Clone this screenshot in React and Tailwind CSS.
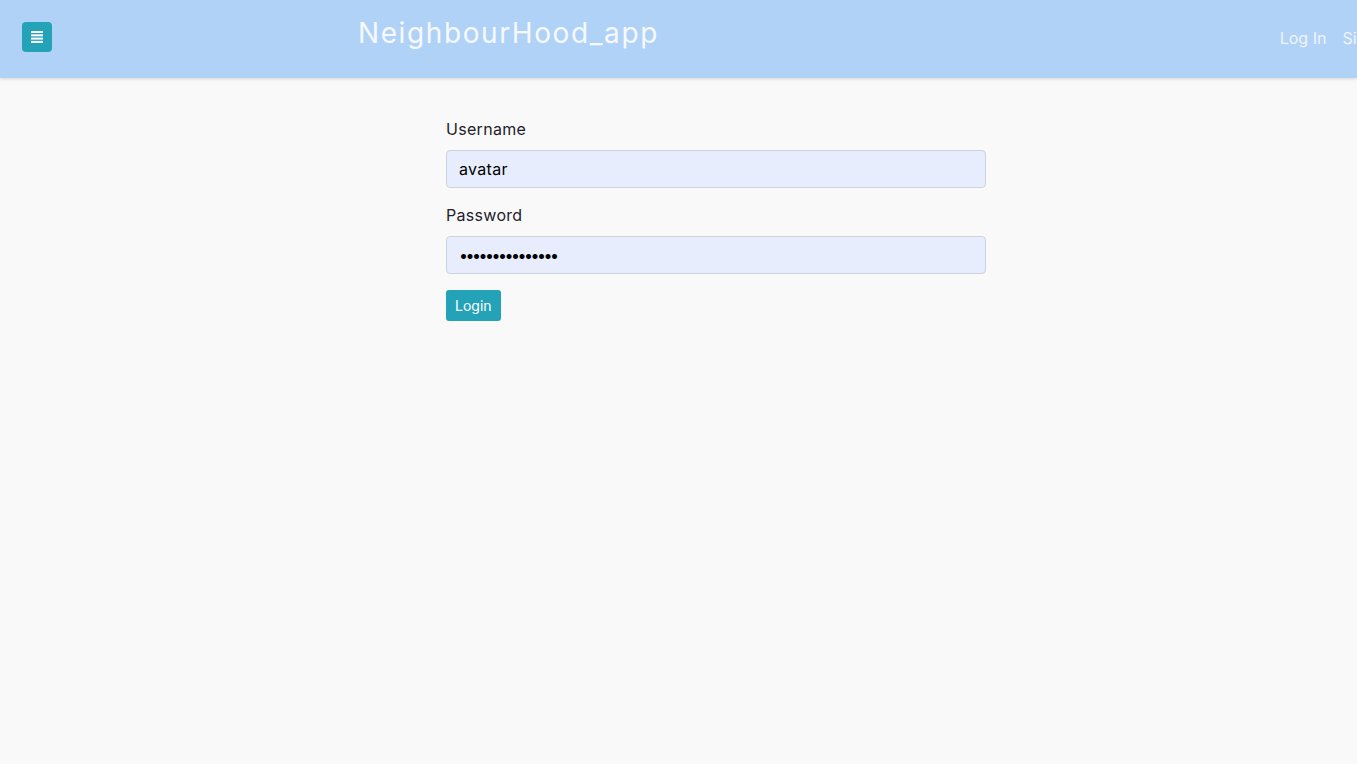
import { useState } from "react";

// simple nav + login form
function MenuIcon() {
  return (
    <svg width="12" height="12" viewBox="0 0 12 12" fill="#fff">
      <rect x="0" y="0" width="12" height="2" />
      <rect x="0" y="3.3" width="12" height="2" />
      <rect x="0" y="6.6" width="12" height="2" />
      <rect x="0" y="9.9" width="12" height="2" />
    </svg>
  );
}

export default function App() {
  const [username, setUsername] = useState("avatar");
  const [password, setPassword] = useState("•••••••••••••••");

  return (
    <div className="min-h-[764px] bg-[#f9f9f9] font-['Inter',sans-serif]">
      <nav className="h-[78px] bg-[#b1d2f7] shadow-[0_1px_3px_rgba(0,0,0,0.15)] flex items-start overflow-hidden">
        <button className="mt-[22px] ml-[22px] w-[30px] h-[30px] rounded-[4px] bg-[#23a2b8] flex items-center justify-center shrink-0">
          <MenuIcon />
        </button>
        <span className="ml-[306px] mt-[14px] text-[28px] leading-[38px] text-[#f6f9ff] tracking-[1.6px] whitespace-nowrap">
          NeighbourHood_app
        </span>
        <div className="ml-auto mt-[27px] flex gap-[16px] text-[16px] leading-[22px] text-[#eef4fd] whitespace-nowrap translate-x-[45px]">
          <a>Log In</a>
          <a>Sign Up</a>
        </div>
      </nav>

      <main className="w-[540px] ml-[446px] pt-[40px]">
        <label className="block text-[16px] leading-[22px] text-[#241b2b] tracking-[0.3px]">Username</label>
        <input
          className="mt-[10px] w-full h-[38px] px-[12px] rounded-[4px] border border-[#cfd2dc] bg-[#e8edfe] text-[16px] text-black outline-none tracking-[0.3px]"
          value={username}
          onChange={(e) => setUsername(e.target.value)}
        />
        <label className="block mt-[16px] text-[16px] leading-[22px] text-[#241b2b] tracking-[0.3px]">Password</label>
        <input
          className="mt-[10px] w-full h-[38px] px-[12px] rounded-[4px] border border-[#cfd2dc] bg-[#e8edfe] text-[16px] text-black outline-none tracking-[-2.5px]"
          value={password}
          onChange={(e) => setPassword(e.target.value)}
        />
        <button className="mt-[16px] h-[31px] px-[9px] rounded-[3px] bg-[#23a2b8] text-white text-[14px]">
          Login
        </button>
      </main>
    </div>
  );
}
